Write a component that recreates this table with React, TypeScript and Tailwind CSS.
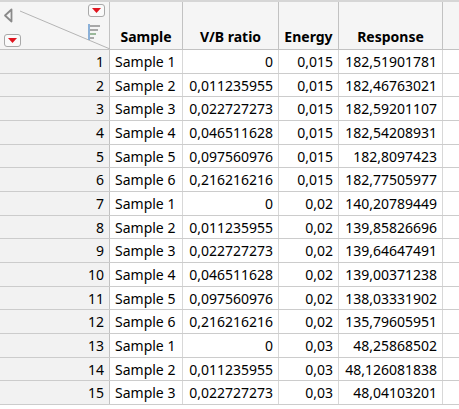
import React from 'react';

type Row = [string, string, string, string];

const rows: Row[] = [
  ['Sample 1', '0', '0,015', '182,51901781'],
  ['Sample 2', '0,011235955', '0,015', '182,46763021'],
  ['Sample 3', '0,022727273', '0,015', '182,59201107'],
  ['Sample 4', '0,046511628', '0,015', '182,54208931'],
  ['Sample 5', '0,097560976', '0,015', '182,8097423'],
  ['Sample 6', '0,216216216', '0,015', '182,77505977'],
  ['Sample 1', '0', '0,02', '140,20789449'],
  ['Sample 2', '0,011235955', '0,02', '139,85826696'],
  ['Sample 3', '0,022727273', '0,02', '139,64647491'],
  ['Sample 4', '0,046511628', '0,02', '139,00371238'],
  ['Sample 5', '0,097560976', '0,02', '138,03331902'],
  ['Sample 6', '0,216216216', '0,02', '135,79605951'],
  ['Sample 1', '0', '0,03', '48,25868502'],
  ['Sample 2', '0,011235955', '0,03', '48,126081838'],
  ['Sample 3', '0,022727273', '0,03', '48,04103201'],
];

const RedMenu: React.FC<{ className: string }> = ({ className }) => (
  <div
    className={`absolute flex h-[13px] w-[17px] items-center justify-center rounded-[3px] border border-[#a9a9a9] bg-[#fafafa] ${className}`}
  >
    <svg width="9" height="5" viewBox="0 0 9 5">
      <path d="M0 0 H9 L4.5 5 Z" fill="#e0141e" />
    </svg>
  </div>
);

const App: React.FC = () => {
  return (
    <div
      className="h-[409px] w-[459px] overflow-hidden bg-white text-[14px] text-black"
      style={{ fontFamily: '"Noto Sans", "Open Sans", sans-serif' }}
    >
      <div className="h-[2px] bg-[#d6d6d6]" />

      {/* header */}
      <div className="flex h-[48px] border-b border-[#c2c2c2] bg-[#f5f5f5]">
        <div className="relative w-[110px] shrink-0 border-r border-[#c2c2c2]">
          <svg className="absolute left-0 top-0" width="110" height="47">
            <line x1="20" y1="9" x2="110" y2="47" stroke="#b4b4b4" strokeWidth="1" />
          </svg>
          <svg className="absolute left-[3px] top-[6px]" width="10" height="15" viewBox="0 0 10 15">
            <path d="M8.5 1.5 L2 7.5 L8.5 13.5 Z" fill="#f5f5f5" stroke="#8a8a8a" strokeWidth="1.8" strokeLinejoin="round" />
          </svg>
          <RedMenu className="left-[88px] top-[2px]" />
          <RedMenu className="left-[4px] top-[32px]" />
          <svg className="absolute left-[88px] top-[22px]" width="12" height="16" viewBox="0 0 12 16">
            <rect x="0" y="0" width="2" height="16" fill="#8ab0d8" />
            <rect x="2" y="1" width="10" height="2" fill="#a8a8a8" />
            <rect x="2" y="5" width="8" height="2" fill="#a8a8a8" />
            <rect x="2" y="9" width="6" height="2" fill="#9ab89a" />
            <rect x="2" y="13" width="4" height="2" fill="#a8a8a8" />
          </svg>
        </div>
        <div className="flex w-[73px] shrink-0 items-end justify-center border-r border-[#c2c2c2] pb-[2px] font-bold">Sample</div>
        <div className="flex w-[96px] shrink-0 items-end justify-center border-r border-[#c2c2c2] pb-[2px] font-bold">V/B ratio</div>
        <div className="flex w-[60px] shrink-0 items-end justify-center border-r border-[#c2c2c2] pb-[2px] font-bold">Energy</div>
        <div className="flex w-[104px] shrink-0 items-end justify-center border-r border-[#c2c2c2] pb-[2px] font-bold">Response</div>
        <div className="flex-1" />
      </div>

      {/* rows */}
      {rows.map((r, i) => (
        <div key={i} className="flex h-[23.67px] border-b border-[#cccccc] leading-[23px]">
          <div className="w-[110px] shrink-0 border-r border-[#c2c2c2] bg-[#f2f2f2] pr-[5px] text-right">{i + 1}</div>
          <div className="w-[73px] shrink-0 border-r border-[#d8d8d8] pl-[5px]">{r[0]}</div>
          <div className="w-[96px] shrink-0 border-r border-[#d8d8d8] pr-[5px] text-right">{r[1]}</div>
          <div className="w-[60px] shrink-0 border-r border-[#d8d8d8] pr-[5px] text-right">{r[2]}</div>
          <div className="w-[104px] shrink-0 border-r border-[#d8d8d8] pr-[5px] text-right">{r[3]}</div>
          <div className="flex-1" />
        </div>
      ))}
    </div>
  );
};

export default App;
